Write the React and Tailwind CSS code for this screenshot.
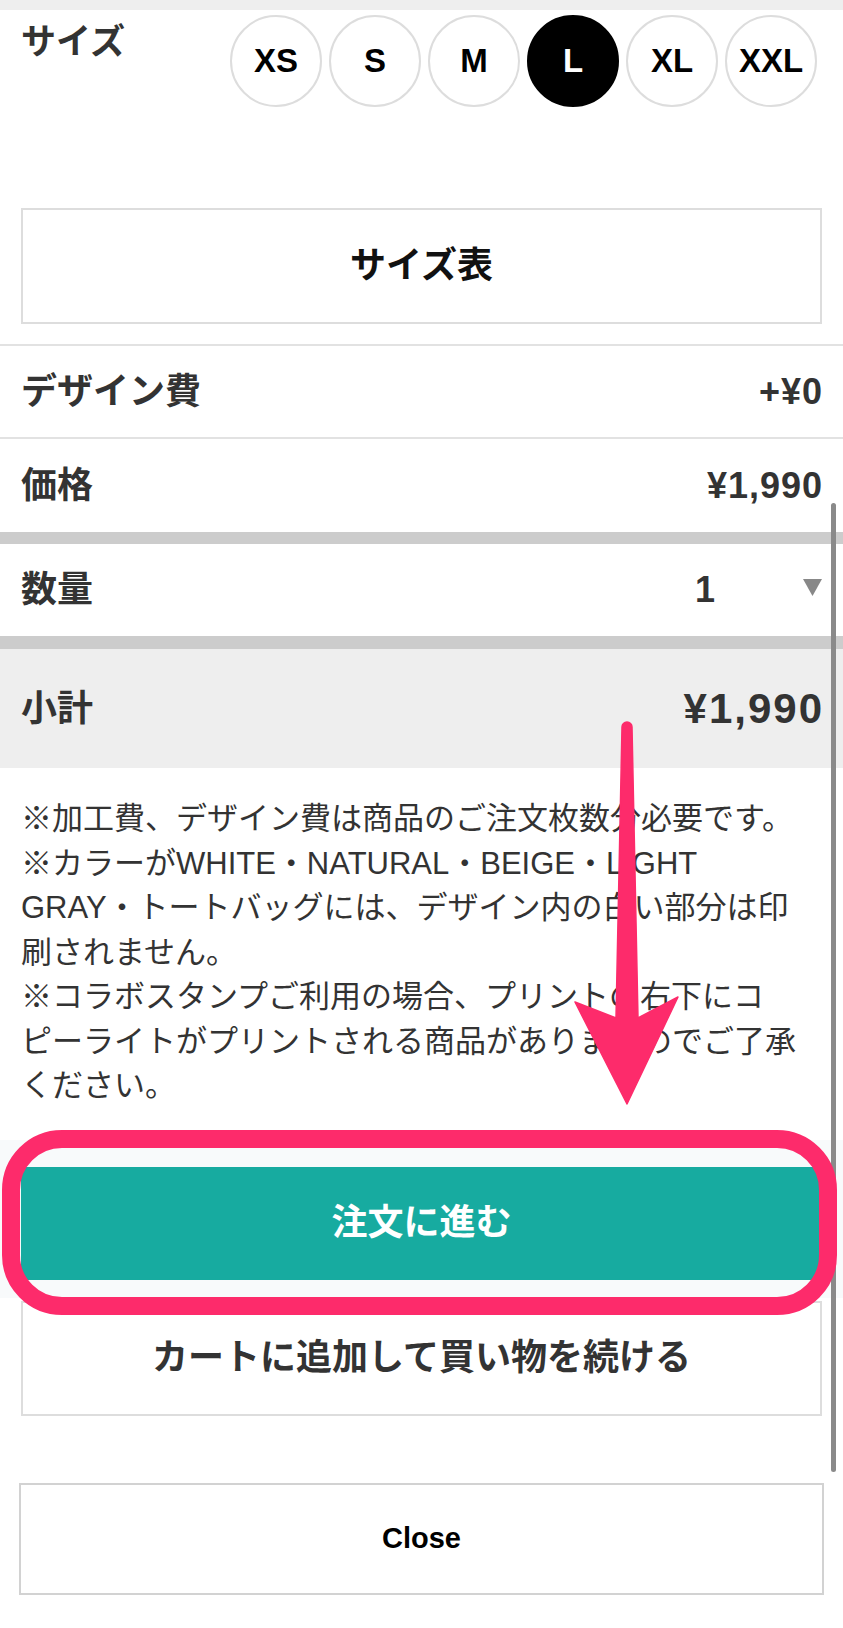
import React from "react";

const sizes = ["XS", "S", "M", "L", "XL", "XXL"];

const notes = [
  "※加工費、デザイン費は商品のご注文枚数分必要です。",
  "※カラーがWHITE・NATURAL・BEIGE・LIGHT",
  "GRAY・トートバッグには、デザイン内の白い部分は印",
  "刷されません。",
  "※コラボスタンプご利用の場合、プリントの右下にコ",
  "ピーライトがプリントされる商品がありますのでご了承",
  "ください。",
];

export default function App() {
  return (
    <div className="relative w-[843px] h-[1628px] overflow-hidden bg-white text-[#333] font-['Liberation_Sans','Noto_Sans_CJK_JP',sans-serif]">
      <div className="h-[10px] bg-[#eeeeee]" />

      {/* Size selector */}
      <div className="px-[21px] pb-[20px]">
        <div className="flex h-[97px] pt-[5px]">
          <div className="w-[209px] pt-[6px] text-[35px] font-bold leading-[42px] text-[#333]">
            サイズ
          </div>
          <div className="flex gap-[7px]">
            {sizes.map((s) => {
              const active = s === "L";
              return (
                <div
                  key={s}
                  className={
                    active
                      ? "flex h-[92px] w-[92px] items-center justify-center rounded-full border-2 border-black bg-black text-[33px] font-bold text-white"
                      : "flex h-[92px] w-[92px] items-center justify-center rounded-full border-2 border-[#dddddd] bg-white text-[33px] font-bold text-black"
                  }
                >
                  {s}
                </div>
              );
            })}
          </div>
        </div>
        <div className="mt-[101px] flex h-[116px] items-center justify-center border-2 border-[#dddddd] text-[36px] font-bold text-[#111]">
          サイズ表
        </div>
      </div>

      {/* Rows */}
      <div className="flex h-[93px] items-center justify-between border-t-2 border-[#e2e2e2] px-[21px]">
        <span className="text-[36px] font-bold">デザイン費</span>
        <span className="mr-[-1px] text-[36px] font-bold tracking-[1px]">+¥0</span>
      </div>
      <div className="flex h-[95px] items-center justify-between border-t-2 border-[#e2e2e2] px-[21px]">
        <span className="text-[36px] font-bold">価格</span>
        <span className="mr-[-1px] text-[36px] font-bold tracking-[1px]">¥1,990</span>
      </div>
      <div className="h-[12px] bg-[#cccccc]" />
      <div className="flex h-[92px] items-center justify-between px-[21px]">
        <span className="text-[36px] font-bold">数量</span>
        <div className="flex items-center gap-[88px]">
          <span className="text-[36px] font-bold">1</span>
          <svg width="19" height="17" viewBox="0 0 19 17" className="mb-[6px]">
            <polygon points="0,0 19,0 9.5,17" fill="#888888" />
          </svg>
        </div>
      </div>
      <div className="h-[13px] bg-[#cccccc]" />
      <div className="flex h-[119px] items-center justify-between bg-[#eeeeee] px-[21px]">
        <span className="text-[36px] font-bold">小計</span>
        <span className="mr-[-2px] text-[42px] font-bold tracking-[2px]">¥1,990</span>
      </div>

      {/* Notes */}
      <div className="px-[21px] pt-[29px] text-[31px] text-[#333]">
        {notes.map((l, i) => (
          <div key={i} className="h-[44.5px] whitespace-nowrap leading-[44.5px]">
            {l}
          </div>
        ))}
      </div>

      {/* Buttons */}
      <div className="mt-[31px] bg-[#f8fafb] px-[21px] pb-[18px] pt-[27px]">
        <div className="flex h-[113px] items-center justify-center bg-[#17aba0] text-[36px] font-bold text-white">
          注文に進む
        </div>
      </div>
      <div className="px-[21px]">
        <div className="mt-[3px] flex h-[115px] items-center justify-center border-2 border-[#dddddd] text-[36px] font-bold text-[#333]">
          カートに追加して買い物を続ける
        </div>
      </div>
      <div className="px-[19px]">
        <div className="mt-[67px] flex h-[112px] items-center justify-center border-2 border-[#d2d2d2] text-[29px] font-bold text-black">
          Close
        </div>
      </div>

      {/* Scrollbar */}
      <div className="absolute left-[831px] top-[503px] h-[969px] w-[5px] rounded-full bg-[#8a8a8a]" />

      {/* Annotation overlay */}
      <svg
        className="pointer-events-none absolute left-0 top-0"
        width="843"
        height="1628"
        viewBox="0 0 843 1628"
      >
        <path
          d="M622,727 A5,5 0 0 1 632,727 L638,1018 L678,997 L627,1104 L575,1002 L616,1018 Z"
          fill="#fd2b6b"
          stroke="#fd2b6b"
          strokeWidth="1.5"
          strokeLinejoin="round"
        />
        <rect
          x="11"
          y="1139"
          width="817"
          height="167"
          rx="51"
          ry="51"
          fill="none"
          stroke="#fd2b6b"
          strokeWidth="18"
        />
      </svg>
    </div>
  );
}
